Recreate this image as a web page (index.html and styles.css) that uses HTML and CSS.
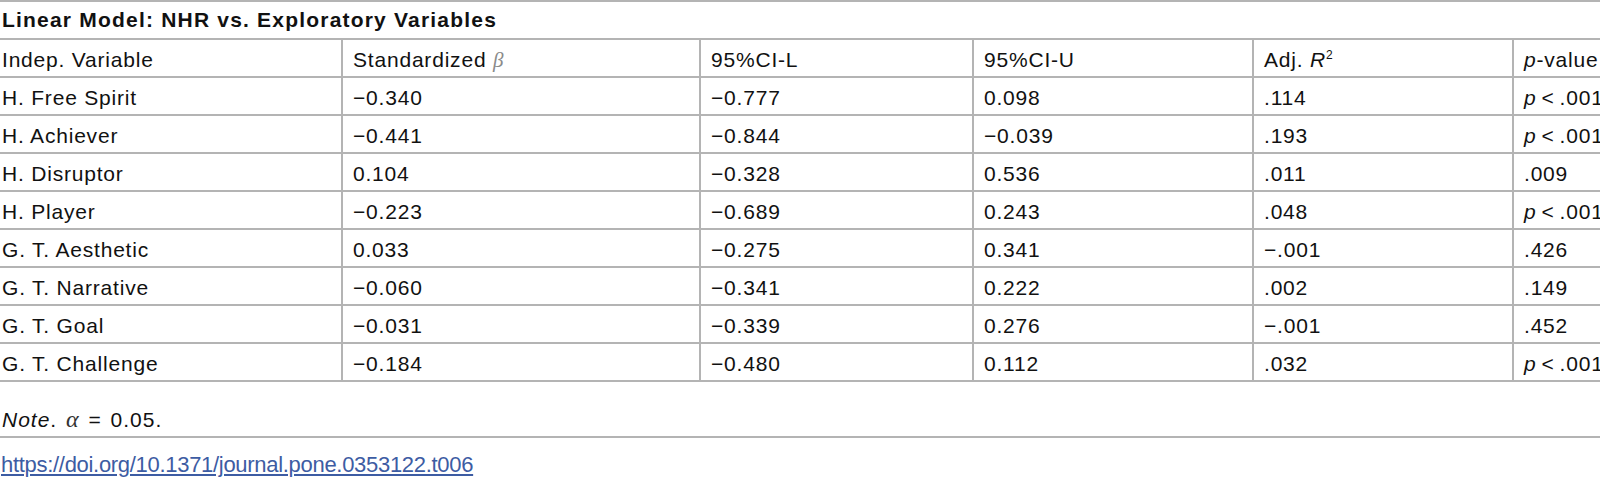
FILE: index.html
```html
<!DOCTYPE html>
<html lang="en">
<head>
<meta charset="utf-8">
<title>Linear Model: NHR vs. Exploratory Variables</title>
<link rel="stylesheet" href="styles.css">
</head>
<body>
<div class="figure">
  <div class="title">Linear Model: NHR vs. Exploratory Variables</div>
  <table class="data">
    <colgroup>
      <col class="c1"><col class="c2"><col class="c3"><col class="c4"><col class="c5"><col class="c6">
    </colgroup>
    <thead>
      <tr>
        <th>Indep. Variable</th>
        <th>Standardized <span class="beta">β</span></th>
        <th>95%CI-L</th>
        <th>95%CI-U</th>
        <th>Adj. <i>R</i><sup>2</sup></th>
        <th><i>p</i>-value</th>
      </tr>
    </thead>
    <tbody>
      <tr><td>H. Free Spirit</td><td>−0.340</td><td>−0.777</td><td>0.098</td><td>.114</td><td><i>p</i>&thinsp;&lt;&thinsp;.001</td></tr>
      <tr><td>H. Achiever</td><td>−0.441</td><td>−0.844</td><td>−0.039</td><td>.193</td><td><i>p</i>&thinsp;&lt;&thinsp;.001</td></tr>
      <tr><td>H. Disruptor</td><td>0.104</td><td>−0.328</td><td>0.536</td><td>.011</td><td>.009</td></tr>
      <tr><td>H. Player</td><td>−0.223</td><td>−0.689</td><td>0.243</td><td>.048</td><td><i>p</i>&thinsp;&lt;&thinsp;.001</td></tr>
      <tr><td>G. T. Aesthetic</td><td>0.033</td><td>−0.275</td><td>0.341</td><td>−.001</td><td>.426</td></tr>
      <tr><td>G. T. Narrative</td><td>−0.060</td><td>−0.341</td><td>0.222</td><td>.002</td><td>.149</td></tr>
      <tr><td>G. T. Goal</td><td>−0.031</td><td>−0.339</td><td>0.276</td><td>−.001</td><td>.452</td></tr>
      <tr><td>G. T. Challenge</td><td>−0.184</td><td>−0.480</td><td>0.112</td><td>.032</td><td><i>p</i>&thinsp;&lt;&thinsp;.001</td></tr>
    </tbody>
  </table>
  <div class="note"><i>Note</i>. <span class="alpha">α</span> = 0.05.</div>
  <div class="doi"><a href="https://doi.org/10.1371/journal.pone.0353122.t006">https://doi.org/10.1371/journal.pone.0353122.t006</a></div>
</div>
</body>
</html>
```

FILE: styles.css
```css
html {
  overflow: hidden;
}

body {
  margin: 0;
  background: #ffffff;
  color: #111111;
  font-family: "Liberation Sans", Arial, sans-serif;
  font-size: 21px;
}

.figure {
  width: 1640px;
}

.title {
  border-top: 2px solid #b4b4b4;
  border-bottom: 2px solid #b4b4b4;
  height: 36px;
  line-height: 36px;
  padding-left: 2px;
  font-weight: bold;
  letter-spacing: 1.2px;
  white-space: nowrap;
}

.data {
  border-collapse: separate;
  border-spacing: 0;
  table-layout: fixed;
  width: 1640px;
}

.c1 { width: 341px; }
.c2 { width: 358px; }
.c3 { width: 273px; }
.c4 { width: 280px; }
.c5 { width: 260px; }
.c6 { width: 128px; }

.data th,
.data td {
  padding: 4px 10px 0 10px;
  line-height: 32px;
  border-bottom: 2px solid #b4b4b4;
  border-left: 2px solid #b4b4b4;
  text-align: left;
  font-weight: normal;
  white-space: nowrap;
  vertical-align: top;
  letter-spacing: 0.8px;
}

.data th:first-child,
.data td:first-child {
  border-left: none;
  padding-left: 2px;
}

.beta {
  font-family: "Liberation Serif", serif;
  font-style: italic;
  color: #8a8a8a;
  letter-spacing: 0;
}

sup {
  font-size: 12px;
  line-height: 0;
  vertical-align: 8px;
  letter-spacing: 0;
}

.note {
  padding: 25px 2px 4px 2px;
  line-height: 24px;
  border-bottom: 2px solid #b4b4b4;
  letter-spacing: 1px;
  word-spacing: 2px;
}

.alpha {
  font-family: "Liberation Serif", serif;
  font-style: italic;
  font-size: 24px;
  color: #333333;
}

.doi {
  padding: 14px 0 0 1px;
  line-height: 26px;
}

.doi a {
  color: #3d5ca3;
  text-decoration: underline;
  font-size: 22px;
  letter-spacing: -0.3px;
}
```
